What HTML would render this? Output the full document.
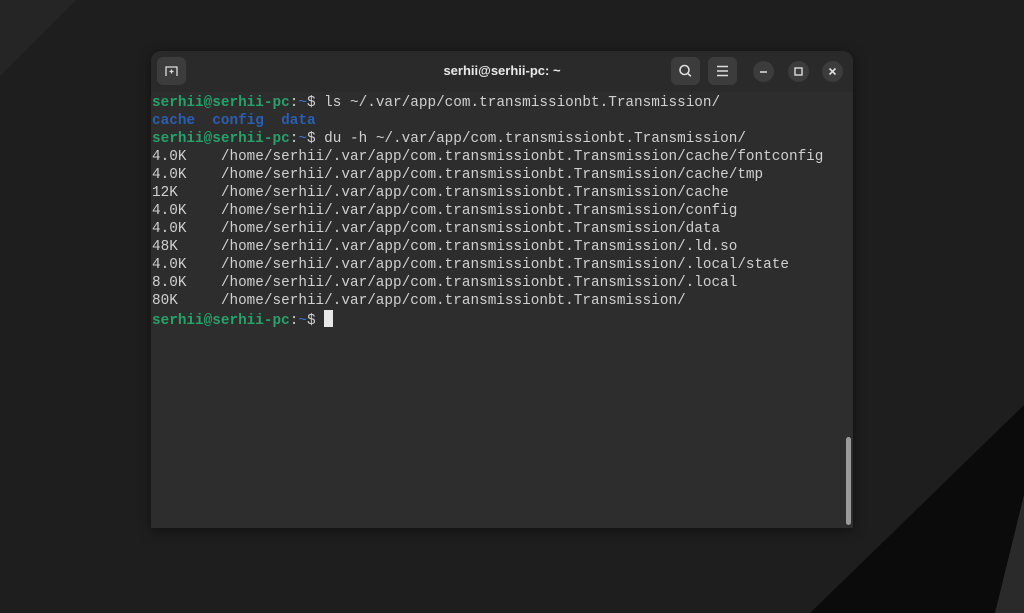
<!DOCTYPE html>
<html><head><meta charset="utf-8"><style>
html,body{margin:0;padding:0;width:1024px;height:613px;overflow:hidden;background:#1e1e1e;font-family:"Liberation Sans",sans-serif}
.bg{position:absolute;left:0;top:0}
.win{position:absolute;left:151px;top:51px;width:702px;height:477px;background:#2d2d2d;border-radius:10px 10px 0 0;overflow:hidden;box-shadow:0 2px 12px rgba(0,0,0,.5)}
.tb{position:absolute;left:0;top:0;width:702px;height:41px;background:#2a2a2a}
.title{position:absolute;left:0;width:702px;top:12px;text-align:center;color:#e8e8e8;font-weight:bold;font-size:13px}
.btn{position:absolute;top:6px;width:29px;height:28px;border-radius:6px;background:#3c3c3c}
.cbtn{position:absolute;top:10px;width:21px;height:21px;border-radius:50%;background:#3c3c3c}
pre{position:absolute;left:1px;top:43px;margin:0;font-family:"Liberation Mono",monospace;font-size:14.35px;line-height:18px;color:#d0d0d0}
.g{color:#26a269;font-weight:bold}.b{color:#2a5fb0;font-weight:bold}.bl{color:#3a76c4}
.cur{display:inline-block;width:9px;height:17px;background:#e8e8e8;vertical-align:-3px}
.sb{position:absolute;left:695px;top:386px;width:5px;height:88px;border-radius:3px;background:#9a9a9a}
</style></head><body>
<svg class="bg" width="1024" height="613">
<polygon points="0,0 76,0 0,76" fill="#252525"/>
<polygon points="1024,405 1024,613 810,613" fill="#0b0b0b"/>
<polygon points="1024,495 1024,613 995,613" fill="#2a2a2a"/>
</svg>
<div class="win">
<div class="tb">
<div class="btn" style="left:6px"><svg width="29" height="28"><path d="M9 19V10h11v9" fill="none" stroke="#ddd" stroke-width="1.3"/><path d="M14.5 12.5v4M12.5 14.5h4" stroke="#ddd" stroke-width="1.3"/></svg></div>
<div class="title">serhii@serhii-pc: ~</div>
<div class="btn" style="left:520px"><svg width="29" height="28"><circle cx="13.5" cy="13" r="4.5" fill="none" stroke="#ddd" stroke-width="1.6"/><path d="M16.8 16.3l3 3" stroke="#ddd" stroke-width="1.6"/></svg></div>
<div class="btn" style="left:557px"><svg width="29" height="28"><path d="M9 9.5h11M9 14h11M9 18.5h11" stroke="#ddd" stroke-width="1.4"/></svg></div>
<div class="cbtn" style="left:602px"><svg width="21" height="21"><path d="M7 11h7" stroke="#ddd" stroke-width="1.6"/></svg></div>
<div class="cbtn" style="left:637px"><svg width="21" height="21"><rect x="7" y="7" width="7" height="7" fill="none" stroke="#ddd" stroke-width="1.4"/></svg></div>
<div class="cbtn" style="left:671px"><svg width="21" height="21"><path d="M7.5 7.5l6 6M13.5 7.5l-6 6" stroke="#ddd" stroke-width="1.6"/></svg></div>
</div>
<pre><span class="g">serhii@serhii-pc</span>:<span class="bl">~</span>$ ls ~/.var/app/com.transmissionbt.Transmission/
<span class="b">cache</span>  <span class="b">config</span>  <span class="b">data</span>
<span class="g">serhii@serhii-pc</span>:<span class="bl">~</span>$ du -h ~/.var/app/com.transmissionbt.Transmission/
4.0K    /home/serhii/.var/app/com.transmissionbt.Transmission/cache/fontconfig
4.0K    /home/serhii/.var/app/com.transmissionbt.Transmission/cache/tmp
12K     /home/serhii/.var/app/com.transmissionbt.Transmission/cache
4.0K    /home/serhii/.var/app/com.transmissionbt.Transmission/config
4.0K    /home/serhii/.var/app/com.transmissionbt.Transmission/data
48K     /home/serhii/.var/app/com.transmissionbt.Transmission/.ld.so
4.0K    /home/serhii/.var/app/com.transmissionbt.Transmission/.local/state
8.0K    /home/serhii/.var/app/com.transmissionbt.Transmission/.local
80K     /home/serhii/.var/app/com.transmissionbt.Transmission/
<span class="g">serhii@serhii-pc</span>:<span class="bl">~</span>$ <span class="cur"></span></pre>
<div class="sb"></div>
</div>
</body></html>
